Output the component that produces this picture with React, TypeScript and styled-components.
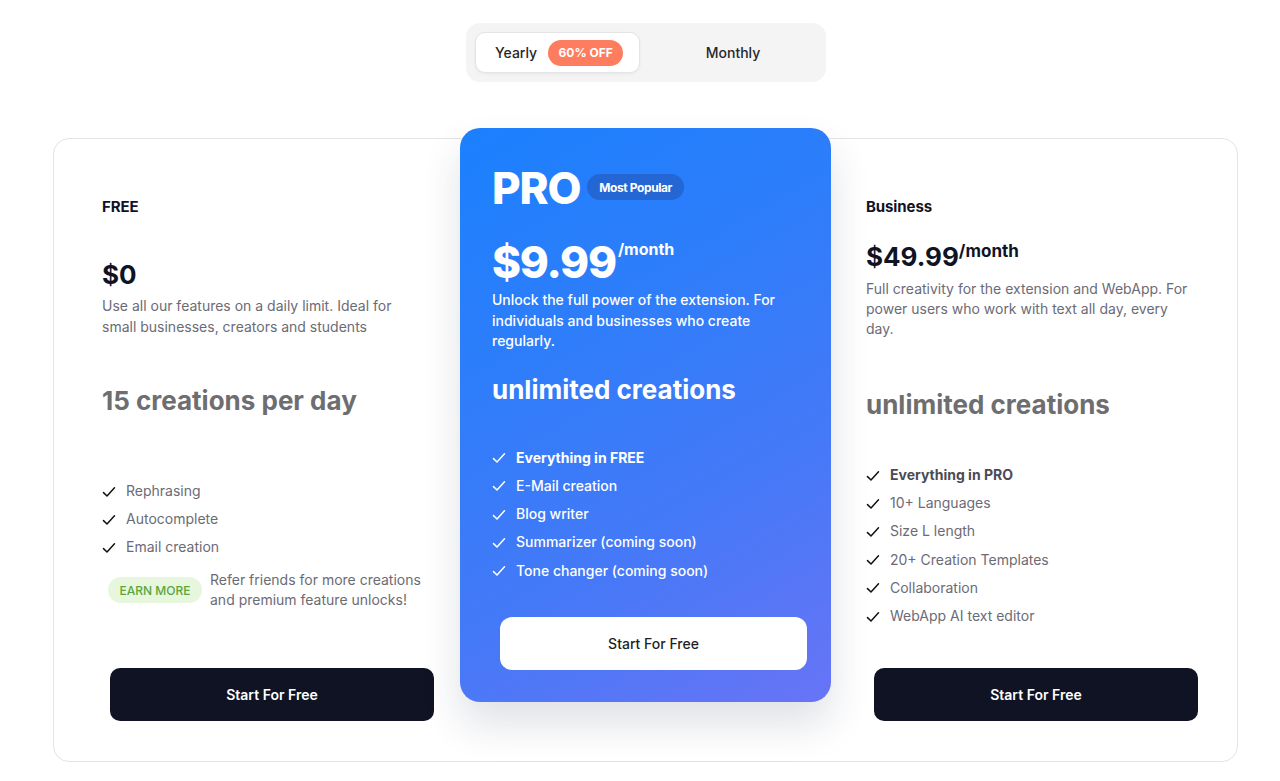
import React from "react";
import styled, { createGlobalStyle, css } from "styled-components";

const Global = createGlobalStyle`
  html, body { margin: 0; padding: 0; background: #ffffff; }
  body { font-family: Inter, "Noto Sans", "Liberation Sans", sans-serif; -webkit-font-smoothing: antialiased; }
  * { box-sizing: border-box; }
`;

const Page = styled.div`
  display: flex;
  flex-direction: column;
  align-items: center;
  padding-top: 23px;
  min-height: 781px;
`;

const Toggle = styled.div`
  display: flex;
  align-items: center;
  width: 360px;
  height: 59px;
  padding: 9px 0 9px 9px;
  background: #f4f4f5;
  border-radius: 14px;
  margin-left: 12px;
`;

const Tab = styled.div<{ $active?: boolean }>`
  height: 41px;
  display: flex;
  align-items: center;
  font-size: 14px;
  font-weight: 500;
  color: #27272a;
  ${(p) =>
    p.$active
      ? css`
          width: 165px;
          padding-left: 19px;
          gap: 11px;
          background: #fff;
          border: 1px solid #e4e4e7;
          border-radius: 10px;
          box-shadow: 0 1px 3px rgba(0, 0, 0, 0.06);
        `
      : css`
          flex: 1;
          justify-content: center;
        `}
`;

const OffPill = styled.span`
  display: inline-flex;
  align-items: center;
  justify-content: center;
  width: 75px;
  height: 26px;
  border-radius: 13px;
  background: #fd7d5e;
  color: #fff;
  font-size: 12px;
  font-weight: 700;
`;

const Board = styled.div`
  align-self: flex-start;
  margin: 56px 0 0 53px;
  width: 1185px;
  height: 624px;
  border: 1px solid #e4e4e7;
  border-radius: 16px;
  display: grid;
  grid-template-columns: 406px 371px 1fr;
  align-items: stretch;
`;

const Column = styled.div<{ $pl: number }>`
  display: flex;
  flex-direction: column;
  padding: 58px 24px 40px ${(p) => p.$pl}px;
`;

const ProCard = styled.div`
  align-self: start;
  margin-top: -11px;
  height: 574px;
  border-radius: 20px;
  background: linear-gradient(150deg, #1b80fe 0%, #2f7dfa 35%, #4479f7 65%, #6874f6 100%);
  box-shadow: 0 22px 40px rgba(30, 40, 80, 0.14);
  display: flex;
  flex-direction: column;
  padding: 36px 24px 32px 32px;
  color: #fff;
`;

const PlanName = styled.div`
  font-size: 15px;
  line-height: 20px;
  font-weight: 700;
  color: #0f1326;
  letter-spacing: -0.1px;
`;

const Price = styled.div<{ $mt: number }>`
  margin-top: ${(p) => p.$mt}px;
  font-size: 26px;
  line-height: 32px;
  font-weight: 700;
  color: #0f1326;
  display: flex;
  align-items: flex-start;
`;

const PerMonth = styled.span`
  font-size: 17px;
  line-height: 20px;
  font-weight: 700;
  margin-top: 0;
`;

const Desc = styled.p<{ $mt: number; $lh: number; $w: number; $light?: boolean }>`
  margin: ${(p) => p.$mt}px 0 0;
  font-size: 14px;
  line-height: ${(p) => p.$lh}px;
  color: ${(p) => (p.$light ? "#ffffff" : "#6b6b76")};
  font-weight: ${(p) => (p.$light ? 500 : 400)};
  max-width: ${(p) => p.$w}px;
`;

const Highlight = styled.div<{ $mt: number; $light?: boolean }>`
  margin-top: ${(p) => p.$mt}px;
  font-size: 26px;
  line-height: 32px;
  font-weight: 700;
  color: ${(p) => (p.$light ? "#ffffff" : "#6e6e70")};
`;

const Features = styled.ul<{ $mt: number; $lh: number }>`
  list-style: none;
  margin: ${(p) => p.$mt}px 0 0;
  padding: 0;
  li {
    line-height: ${(p) => p.$lh}px;
  }
`;

const Feature = styled.li<{ $light?: boolean; $bold?: boolean }>`
  display: flex;
  align-items: center;
  gap: 10px;
  font-size: 14px;
  font-weight: ${(p) => (p.$bold ? 700 : p.$light ? 500 : 400)};
  color: ${(p) => (p.$light ? "#ffffff" : p.$bold ? "#4b4b55" : "#6b6b76")};
  svg {
    flex: none;
    margin-top: 1px;
  }
`;

const EarnRow = styled.div`
  margin-top: 9px;
  display: flex;
  align-items: center;
  gap: 8px;
  padding-left: 6px;
`;

const EarnPill = styled.span`
  display: inline-flex;
  align-items: center;
  justify-content: center;
  width: 94px;
  height: 26px;
  border-radius: 13px;
  background: #e6f7dd;
  color: #5ba53c;
  font-size: 12px;
  font-weight: 500;
  flex: none;
`;

const EarnText = styled.span`
  font-size: 14px;
  line-height: 20px;
  color: #6b6b76;
`;

const CTA = styled.button<{ $variant: "dark" | "light"; $w: number }>`
  margin-top: auto;
  margin-left: 8px;
  width: ${(p) => p.$w}px;
  height: 53px;
  border: none;
  font-family: inherit;
  font-size: 14px;
  cursor: pointer;
  ${(p) =>
    p.$variant === "dark"
      ? css`
          background: #0f1324;
          color: #fff;
          font-weight: 600;
          border-radius: 10px;
        `
      : css`
          background: #fff;
          color: #1f1f25;
          font-weight: 500;
          border-radius: 12px;
        `}
`;

const ProHead = styled.div`
  display: flex;
  align-items: center;
  gap: 7px;
`;

const ProTitle = styled.div`
  font-size: 44px;
  line-height: 48px;
  font-weight: 800;
  letter-spacing: -1.2px;
`;

const Popular = styled.span`
  display: inline-flex;
  align-items: center;
  height: 26px;
  padding: 0 12px;
  border-radius: 13px;
  background: #2466d3;
  font-size: 12px;
  font-weight: 700;
  letter-spacing: -0.4px;
  margin-top: -2px;
`;

const ProPrice = styled.div`
  margin-top: 26px;
  display: flex;
  align-items: flex-start;
  font-size: 44px;
  line-height: 48px;
  font-weight: 800;
  letter-spacing: -1.2px;
`;

const ProPer = styled.span`
  font-size: 16px;
  line-height: 20px;
  font-weight: 700;
  margin: 1px 0 0 2px;
  letter-spacing: 0;
`;

const Check = ({ color }: { color: string }) => (
  <svg width="14" height="14" viewBox="0 0 14 14" fill="none">
    <path d="M1.5 7.6 L5 11 L12.5 2.8" stroke={color} strokeWidth="1.5" strokeLinecap="round" strokeLinejoin="round" />
  </svg>
);

export default function App() {
  return (
    <>
      <Global />
      <Page>
        <Toggle>
          <Tab $active>
            Yearly <OffPill>60% OFF</OffPill>
          </Tab>
          <Tab>Monthly</Tab>
        </Toggle>

        <Board>
          <Column $pl={48}>
            <PlanName>FREE</PlanName>
            <Price $mt={42}>$0</Price>
            <Desc $mt={4} $lh={21} $w={300}>
              Use all our features on a daily limit. Ideal for small businesses, creators and students
            </Desc>
            <Highlight $mt={48}>15 creations per day</Highlight>
            <Features $mt={60} $lh={28}>
              {["Rephrasing", "Autocomplete", "Email creation"].map((f) => (
                <Feature key={f}>
                  <Check color="#111" />
                  {f}
                </Feature>
              ))}
            </Features>
            <EarnRow>
              <EarnPill>EARN MORE</EarnPill>
              <EarnText>
                Refer friends for more creations
                <br />
                and premium feature unlocks!
              </EarnText>
            </EarnRow>
            <CTA $variant="dark" $w={324}>Start For Free</CTA>
          </Column>

          <ProCard>
            <ProHead>
              <ProTitle>PRO</ProTitle>
              <Popular>Most Popular</Popular>
            </ProHead>
            <ProPrice>
              $9.99<ProPer>/month</ProPer>
            </ProPrice>
            <Desc $mt={4} $lh={20.5} $w={300} $light>
              Unlock the full power of the extension. For individuals and businesses who create regularly.
            </Desc>
            <Highlight $mt={22} $light>
              unlimited creations
            </Highlight>
            <Features $mt={38} $lh={28.25}>
              <Feature $light $bold>
                <Check color="#fff" />
                Everything in FREE
              </Feature>
              {["E-Mail creation", "Blog writer", "Summarizer (coming soon)", "Tone changer (coming soon)"].map((f) => (
                <Feature key={f} $light>
                  <Check color="#fff" />
                  {f}
                </Feature>
              ))}
            </Features>
            <CTA $variant="light" $w={307}>Start For Free</CTA>
          </ProCard>

          <Column $pl={35}>
            <PlanName>Business</PlanName>
            <Price $mt={24}>
              $49.99<PerMonth>/month</PerMonth>
            </Price>
            <Desc $mt={6} $lh={20} $w={330}>
              Full creativity for the extension and WebApp. For power users who work with text all day, every day.
            </Desc>
            <Highlight $mt={50}>unlimited creations</Highlight>
            <Features $mt={40} $lh={28.2}>
              <Feature $bold>
                <Check color="#111" />
                Everything in PRO
              </Feature>
              {["10+ Languages", "Size L length", "20+ Creation Templates", "Collaboration", "WebApp AI text editor"].map(
                (f) => (
                  <Feature key={f}>
                    <Check color="#111" />
                    {f}
                  </Feature>
                )
              )}
            </Features>
            <CTA $variant="dark" $w={324}>Start For Free</CTA>
          </Column>
        </Board>
      </Page>
    </>
  );
}
